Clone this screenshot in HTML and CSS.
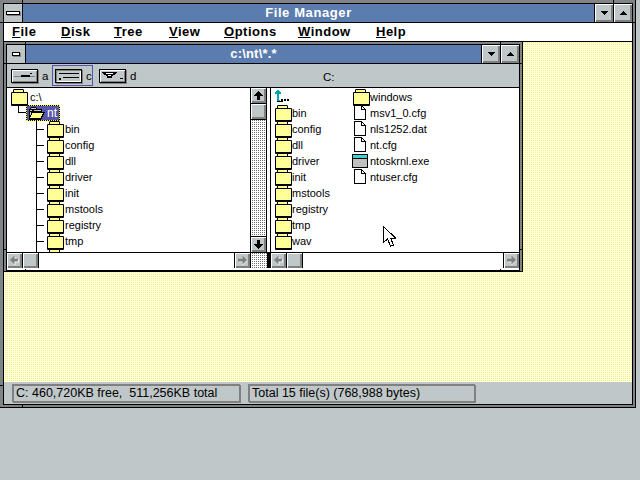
FILE: index.html
```html
<!DOCTYPE html>
<html lang="en">
<head>
<meta charset="utf-8">
<title>File Manager</title>
<link rel="stylesheet" href="styles.css">
</head>
<body>
<svg class="defs" width="0" height="0" aria-hidden="true">
  <defs>
    <symbol id="open" viewBox="0 0 17 13">
      <path d="M1 2h1V1h1V0h5v1h1v1h5v3h3v1h-1v2h-1v2h-1v2h-1v1H1z" fill="#000"/>
      <path d="M3 1h5v1H3zM2 3h2v1H2zM6 3h7v1H6zM2 5h1v3H2z" fill="#c8c8c8"/>
      <path d="M4 6h11v1h-1v2h-1v2H2v-1h1V8h1z" fill="#ffff80"/>
    </symbol>
    <symbol id="file" viewBox="0 0 16 16">
      <path d="M1.5 .5h7l4 4v10h-11zM8.5 .5v4h4" fill="#fff" stroke="#000" shape-rendering="crispEdges"/>
    </symbol>
    <symbol id="updir" viewBox="0 0 16 12">
      <path d="M4 0h1v1h1v1h1v2H5v6h1v1H3V4H1V2h1V1h1V0z" fill="#00a8a8"/>
      <rect x="7" y="9" width="2" height="2" fill="#000"/>
      <rect x="10" y="9" width="2" height="2" fill="#000"/>
      <rect x="13" y="9" width="2" height="2" fill="#000"/>
      <path d="M6 11h3v1H3v-1z" fill="#000"/>
    </symbol>
    <symbol id="tri-d" viewBox="0 0 7 4"><path d="M0 0h7v1H6v1H5v1H4v1H3V3H2V2H1V1H0z" fill="#000"/></symbol>
    <symbol id="tri-u" viewBox="0 0 7 4"><path d="M3 0h1v1h1v1h1v1h1v1H0V3h1V2h1V1h1z" fill="#000"/></symbol>
    <symbol id="ar-u" viewBox="0 0 9 9"><path d="M4 0h1v1h1v1h1v1h1v1h1v1H6v4H3V5H0V4h1V3h1V2h1V1h1z" fill="#000"/></symbol>
    <symbol id="ar-d" viewBox="0 0 9 9"><path d="M3 0h3v4h3v1H8v1H7v1H6v1H5v1H4V8H3V7H2V6H1V5H0V4h3z" fill="#000"/></symbol>
    <symbol id="ar-l" viewBox="0 0 10 10">
      <path d="M5 1h1v3h4v3H6v3H5V9H4V8H3V7H2V6H1V5h1V4h1V3h1V2h1z" fill="#fff"/>
      <path d="M4 0h1v3h4v3H5v3H4V8H3V7H2V6H1V5H0V4h1V3h1V2h1V1h1z" fill="#808080"/>
    </symbol>
    <symbol id="ar-r" viewBox="0 0 10 10">
      <path d="M5 1h1v1h1v1h1v1h1v1h1v1H9v1H8v1H7v1H6v1H5V7H1V4h4z" fill="#fff"/>
      <path d="M5 0h1v1h1v1h1v1h1v1h1v1H9v1H8v1H7v1H6v1H5V6H0V3h5z" fill="#808080"/>
    </symbol>
  </defs>
</svg>

<div class="app">
  <span class="tk tk-mt1"></span><span class="tk tk-mt2"></span><span class="tk tk-mb1"></span><span class="tk tk-ml1"></span><span class="tk tk-ml2"></span><span class="tk tk-mr1"></span>
  <div class="frame">
    <header class="titlebar">
      <div class="btn sysbtn"><span class="dash"></span></div>
      <div class="caption">File Manager</div>
      <div class="btn ctl"><svg class="tri"><use href="#tri-d"/></svg></div>
      <div class="btn ctl"><svg class="tri"><use href="#tri-u"/></svg></div>
    </header>
    <nav class="menu">
      <span><u>F</u>ile</span>
      <span><u>D</u>isk</span>
      <span><u>T</u>ree</span>
      <span><u>V</u>iew</span>
      <span><u>O</u>ptions</span>
      <span><u>W</u>indow</span>
      <span><u>H</u>elp</span>
    </nav>
    <main class="mdi">
      <section class="child">
        <span class="tk tk-c1"></span><span class="tk tk-c2"></span><span class="tk tk-c3"></span><span class="tk tk-c4"></span><span class="tk tk-c5"></span><span class="tk tk-c6"></span><span class="tk tk-c7"></span><span class="tk tk-c8"></span>
        <div class="child-in">
          <header class="titlebar">
            <div class="btn sysbtn small"><span class="dash"></span></div>
            <div class="caption caption-child">c:\nt\*.*</div>
            <div class="btn ctl"><svg class="tri"><use href="#tri-d"/></svg></div>
            <div class="btn ctl"><svg class="tri"><use href="#tri-u"/></svg></div>
          </header>
          <div class="drives">
            <div class="drive">
              <div class="dbtn">
                <svg class="dicon" viewBox="0 0 25 12"><rect x="2" y="6" width="8" height="1" fill="#808080"/><rect x="9" y="5" width="9" height="2" fill="#000"/><rect x="18" y="6" width="5" height="1" fill="#808080"/><rect x="18" y="3" width="2" height="1" fill="#000"/></svg>
              </div>
              <span>a</span>
            </div>
            <div class="drive on">
              <div class="dbtn pressed">
                <svg class="dicon" viewBox="0 0 25 12"><rect x="3" y="3" width="20" height="1" fill="#000"/><rect x="7" y="7" width="16" height="1" fill="#000"/><rect x="3" y="8" width="2" height="2" fill="#000"/></svg>
              </div>
              <span>c</span>
            </div>
            <div class="drive">
              <div class="dbtn">
                <svg class="dicon" viewBox="0 0 25 12"><path d="M2 2h15v1h-1v1h-1v1h-2v1h-1v2H7V6H6V5H4V4H3V3H2z" fill="#000"/><rect x="6" y="3" width="7" height="1" fill="#fff"/><rect x="8" y="5" width="3" height="1" fill="#fff"/><rect x="20" y="8" width="3" height="1" fill="#000"/></svg>
              </div>
              <span>d</span>
            </div>
            <div class="curdrive">C:</div>
          </div>
          <div class="panes">
            <div class="tree">
              <div class="row root"><span class="fold"></span><span class="lbl">c:\</span></div>
              <div class="row cur">
                <span class="elbow"></span>
                <div class="sel"><svg class="openf"><use href="#open"/></svg><span>nt</span></div>
              </div>
              <div class="kids">
                <div class="row"><i class="tick"></i><span class="fold"></span><span class="lbl">bin</span></div>
                <div class="row"><i class="tick"></i><span class="fold"></span><span class="lbl">config</span></div>
                <div class="row"><i class="tick"></i><span class="fold"></span><span class="lbl">dll</span></div>
                <div class="row"><i class="tick"></i><span class="fold"></span><span class="lbl">driver</span></div>
                <div class="row"><i class="tick"></i><span class="fold"></span><span class="lbl">init</span></div>
                <div class="row"><i class="tick"></i><span class="fold"></span><span class="lbl">mstools</span></div>
                <div class="row"><i class="tick"></i><span class="fold"></span><span class="lbl">registry</span></div>
                <div class="row"><i class="tick"></i><span class="fold"></span><span class="lbl">tmp</span></div>
                <div class="row"><i class="tick"></i><span class="fold"></span></div>
              </div>
            </div>
            <div class="vscroll">
              <div class="btn sb sb-up"><svg class="arrow"><use href="#ar-u"/></svg></div>
              <div class="btn sb sb-thumb"></div>
              <div class="track"></div>
              <div class="btn sb sb-down"><svg class="arrow"><use href="#ar-d"/></svg></div>
            </div>
            <div class="split"></div>
            <div class="files">
              <div class="fi"><svg class="ic up"><use href="#updir"/></svg></div>
              <div class="fi"><span class="fold"></span><span>bin</span></div>
              <div class="fi"><span class="fold"></span><span>config</span></div>
              <div class="fi"><span class="fold"></span><span>dll</span></div>
              <div class="fi"><span class="fold"></span><span>driver</span></div>
              <div class="fi"><span class="fold"></span><span>init</span></div>
              <div class="fi"><span class="fold"></span><span>mstools</span></div>
              <div class="fi"><span class="fold"></span><span>registry</span></div>
              <div class="fi"><span class="fold"></span><span>tmp</span></div>
              <div class="fi"><span class="fold"></span><span>wav</span></div>
              <div class="fi"><span class="fold"></span><span>windows</span></div>
              <div class="fi"><svg class="ic"><use href="#file"/></svg><span>msv1_0.cfg</span></div>
              <div class="fi"><svg class="ic"><use href="#file"/></svg><span>nls1252.dat</span></div>
              <div class="fi"><svg class="ic"><use href="#file"/></svg><span>nt.cfg</span></div>
              <div class="fi"><span class="exe"></span><span>ntoskrnl.exe</span></div>
              <div class="fi"><svg class="ic"><use href="#file"/></svg><span>ntuser.cfg</span></div>
            </div>
          </div>
          <div class="hbars">
            <div class="hscroll left">
              <div class="btn hb"><svg class="arrow"><use href="#ar-l"/></svg></div>
              <div class="btn hb hthumb"></div>
              <div class="htrack"></div>
              <div class="btn hb hend"><svg class="arrow"><use href="#ar-r"/></svg></div>
            </div>
            <div class="corner"></div>
            <div class="solid"></div>
            <div class="hscroll right">
              <div class="btn hb"><svg class="arrow"><use href="#ar-l"/></svg></div>
              <div class="btn hb hthumb"></div>
              <div class="htrack"></div>
              <div class="btn hb hend"><svg class="arrow"><use href="#ar-r"/></svg></div>
            </div>
          </div>
        </div>
      </section>
    </main>
    <footer class="status">
      <div class="cell c1">C: 460,720KB free,  511,256KB total</div>
      <div class="cell c2">Total 15 file(s) (768,988 bytes)</div>
    </footer>
  </div>
</div>
<svg class="cursor" viewBox="0 0 13 21" shape-rendering="crispEdges"><path d="M.5 .5v16l4-3.5 3 7 3-1-3-7h5z" fill="#fff" stroke="#000" stroke-width="1"/></svg>
</body>
</html>
```

FILE: styles.css
```css
* { box-sizing: border-box; }
html, body { margin: 0; padding: 0; }
body {
  width: 640px;
  height: 480px;
  overflow: hidden;
  background: #c0c7c8;
  font-family: "Liberation Sans", Arial, sans-serif;
  color: #000;
  position: relative;
}
.defs { position: absolute; }

.app {
  position: relative;
  width: 636px;
  height: 408px;
  background: #808486;
  padding: 3px 2px 2px 3px;
  border-right: 1px solid #000;
  border-bottom: 1px solid #000;
}
.frame {
  height: 402px;
  border: 1px solid #000;
  display: flex;
  flex-direction: column;
  background: #fff;
}

.titlebar {
  display: flex;
  height: 19px;
  flex: none;
  border-bottom: 1px solid #000;
}
.btn {
  background: #c0c7c8;
  box-shadow: inset 1px 1px 0 #fff, inset -1px -1px 0 #808080, inset -2px -2px 0 #808080;
  display: flex;
  align-items: center;
  justify-content: center;
  flex: none;
}
.sysbtn { width: 19px; border-right: 1px solid #000; box-shadow: none; }
.dash {
  width: 14px;
  height: 4px;
  background: #fff;
  border: 1px solid #000;
  box-shadow: 1px 1px 0 #808080;
}
.small .dash { width: 8px; }
.ctl { width: 19px; border-left: 1px solid #000; }
.tri { width: 7px; height: 4px; }
.caption {
  flex: 1;
  text-align: center;
  color: #fff;
  font-weight: bold;
  font-size: 13px;
  letter-spacing: .6px;
  line-height: 18px;
  background: #5b7cae;
}
.caption-child { letter-spacing: .2px; }

.menu {
  height: 19px;
  flex: none;
  display: grid;
  grid-template-columns: 49px 53px 55px 55px 74px 78px auto;
  padding-left: 8px;
  border-bottom: 1px solid #000;
  font-weight: bold;
  font-size: 13px;
  letter-spacing: .5px;
  line-height: 18px;
}

.mdi {
  height: 340px;
  flex: none;
  background: conic-gradient(#ffff30 0 25%, #fff 0) 0 0 / 2px 2px;
}

.child {
  position: relative;
  width: 520px;
  height: 231px;
  margin: -1px 0 0 -1px;
  border: 1px solid #000;
  background: #808486;
  padding: 2px;
}
.child-in {
  height: 227px;
  border: 1px solid #000;
  background: #fff;
  display: flex;
  flex-direction: column;
}

.drives {
  height: 24px;
  flex: none;
  display: flex;
  gap: 3px;
  padding: 1px 0 0 1px;
  background: #c0c7c8;
  border-bottom: 1px solid #000;
  font-size: 11.5px;
}
.drive {
  width: 41px;
  height: 21px;
  display: flex;
  align-items: center;
  gap: 4px;
  padding-left: 2px;
  border: 1px solid transparent;
}
.drive.on { border-color: #5555a8; }
.dbtn {
  width: 27px;
  height: 14px;
  flex: none;
  border: 1px solid #000;
  background: #c0c7c8;
  box-shadow: inset 1px 1px 0 #fff, inset -1px -1px 0 #808080, 1px 1px 0 #808080;
  display: flex;
}
.dbtn.pressed { box-shadow: inset 1px 1px 0 #808080, inset -1px -1px 0 #fff, 1px 1px 0 #808080; }
.dicon { width: 25px; height: 12px; }
.curdrive { margin-left: 183px; line-height: 25px; font-size: 11.5px; }

.panes { display: flex; height: 164px; flex: none; background: #fff; font-size: 11px; }

.tree { width: 243px; flex: none; overflow: hidden; padding-top: 1px; }
.row { display: flex; align-items: center; height: 16px; }
.root { padding-left: 4px; }
.lbl { margin-left: 3px; }
.kids .lbl { margin-left: 2px; }

/* folder drawn with CSS: tab + body */
.fold {
  display: block;
  position: relative;
  width: 16px;
  height: 14px;
  flex: none;
  margin-top: -2px;
}
.fold::before, .fold::after {
  content: "";
  position: absolute;
  border: 1px solid #000;
  background: #ffff98;
}
.fold::before {
  left: 2px;
  top: 0;
  width: 9px;
  height: 5px;
  border-radius: 1px 1px 0 0;
}
.fold::after {
  left: 0;
  top: 3px;
  width: 15px;
  height: 11px;
  border-bottom-width: 2px;
  border-radius: 1px;
}

.cur { align-items: flex-start; }
.elbow {
  width: 8px;
  height: 9px;
  margin: -1px 0 0 11px;
  flex: none;
  border-left: 1px solid #000;
  border-bottom: 1px solid #000;
}
.sel {
  width: 34px;
  height: 16px;
  display: flex;
  align-items: center;
  gap: 2px;
  padding-left: 1px;
  color: #fff;
  font-size: 12px;
  border: 1px dotted #ffff00;
  background: linear-gradient(#5555a8, #5555a8) padding-box, #000 border-box;
}
.openf { width: 17px; height: 13px; flex: none; }
.kids { margin-left: 29px; border-left: 1px solid #000; }
.tick { width: 7px; height: 1px; background: #000; margin-right: 3px; flex: none; }

.vscroll {
  width: 17px;
  flex: none;
  border-left: 1px solid #000;
  border-right: 1px solid #000;
  display: flex;
  flex-direction: column;
}
.sb { width: 15px; height: 15px; }
.sb-up, .sb-thumb { height: 16px; border-bottom: 1px solid #000; }
.sb-down { height: 16px; border-top: 1px solid #000; }
.track, .corner { background: conic-gradient(#707070 0 25%, #fff 0) 0 0 / 2px 2px; }
.track { flex: 1; }
.arrow { width: 9px; height: 9px; flex: none; }
.split { width: 4px; flex: none; border-right: 1px solid #000; background: #fff; }

.files {
  flex: 1;
  display: grid;
  grid-auto-flow: column;
  grid-template-rows: repeat(10, 16px);
  grid-template-columns: 78px 1fr;
  padding: 1px 0 0 4px;
}
.fi { display: flex; align-items: center; gap: 1px; white-space: nowrap; height: 16px; }
.ic { width: 16px; height: 16px; flex: none; }
.up { height: 12px; margin: -2px 0 0 -1px; }
.exe {
  display: block;
  width: 16px;
  height: 14px;
  flex: none;
  margin: -1px 1px 0 -1px;
  border: 1px solid #000;
  background: #c0c0c0;
}
.exe::before {
  content: "";
  display: block;
  height: 3px;
  background: #40d0d0;
  border-bottom: 1px solid #000;
}

.hbars {
  display: flex;
  height: 16px;
  flex: none;
  border-top: 1px solid #000;
}
.hscroll { display: flex; height: 15px; }
.hscroll.left { width: 243px; }
.hscroll.right { width: 248px; }
.hb { width: 16px; height: 15px; border-right: 1px solid #000; }
.hend { width: 16px; border-right: 0; border-left: 1px solid #000; }
.htrack { flex: 1; background: #fff; }
.corner { width: 17px; flex: none; border-left: 1px solid #000; }
.solid { width: 4px; flex: none; background: #000; }

.status {
  height: 22px;
  flex: none;
  display: flex;
  gap: 8px;
  padding: 2px 0 0 8px;
  background: #c0c7c8;
  font-size: 12.5px;
}
.cell {
  height: 18px;
  line-height: 15px;
  padding-left: 2px;
  white-space: pre;
  border: 2px solid #808080;
  border-right-width: 1px;
  border-bottom-width: 1px;
  box-shadow: 1px 1px 0 #808080;
}
.c1 { width: 228px; }
.c2 { width: 227px; }

.tk { position: absolute; background: #000; z-index: 2; }
.tk-mt1, .tk-mt2, .tk-mb1 { width: 1px; height: 3px; }
.tk-mt1 { left: 22px; top: 0; }
.tk-mt2 { left: 613px; top: 0; }
.tk-mb1 { left: 22px; top: 405px; }
.tk-ml1, .tk-ml2 { width: 3px; height: 1px; left: 0; }
.tk-ml1 { top: 22px; }
.tk-ml2 { top: 385px; }
.tk-mr1 { width: 2px; height: 1px; left: 633px; top: 22px; }
.tk-c1, .tk-c2, .tk-c3, .tk-c4 { width: 1px; height: 2px; }
.tk-c1 { left: 21px; top: 0; }
.tk-c2 { left: 496px; top: 0; }
.tk-c3 { left: 21px; top: 227px; }
.tk-c4 { left: 496px; top: 227px; }
.tk-c5, .tk-c6, .tk-c7, .tk-c8 { width: 2px; height: 1px; }
.tk-c5 { left: 0; top: 21px; }
.tk-c6 { left: 516px; top: 21px; }
.tk-c7 { left: 0; top: 207px; }
.tk-c8 { left: 516px; top: 207px; }

.cursor {
  position: absolute;
  left: 383px;
  top: 226px;
  width: 13px;
  height: 21px;
  z-index: 5;
}
```
